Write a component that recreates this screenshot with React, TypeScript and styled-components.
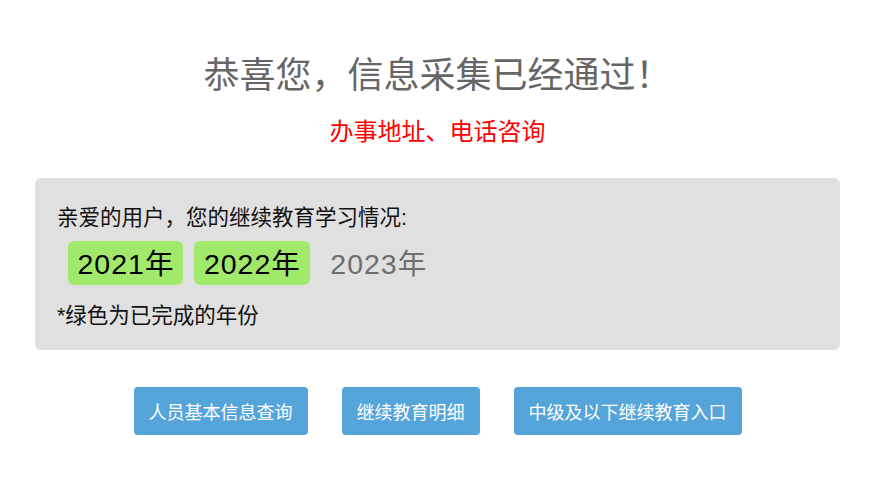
import React from 'react';
import styled, { createGlobalStyle } from 'styled-components';

const GlobalStyle = createGlobalStyle`
  html, body {
    margin: 0;
    padding: 0;
    background: #ffffff;
    font-family: "Liberation Sans", "Noto Sans CJK SC", sans-serif;
  }
`;

const Page = styled.div`
  width: 875px;
  padding: 52px 35px 0;
  box-sizing: border-box;
`;

const Title = styled.h1`
  margin: 0;
  text-align: center;
  font-size: 36px;
  font-weight: 400;
  line-height: 48px;
  color: #666666;
`;

const SubLink = styled.div`
  margin-top: 16px;
  text-align: center;
  font-size: 24px;
  line-height: 32px;
  color: #ff0000;
`;

const InfoBox = styled.div`
  margin-top: 30px;
  background: #e0e0e0;
  border-radius: 6px;
  padding: 26px 22px 22px;
  height: 172px;
  box-sizing: border-box;
`;

const InfoText = styled.div`
  font-size: 21.5px;
  line-height: 28px;
  color: #111111;
`;

const YearRow = styled.div`
  display: flex;
  gap: 11px;
  margin: 9px 0 17px 11px;
`;

const Year = styled.span<{ done?: boolean }>`
  display: inline-block;
  padding: 0 9px 0 9.5px;
  height: 44px;
  line-height: 46px;
  font-size: 28.5px;
  letter-spacing: 1px;
  border-radius: 6px;
  background: ${p => (p.done ? '#a0e96b' : 'transparent')};
  color: ${p => (p.done ? '#000000' : '#6e6e6e')};
`;

const Actions = styled.div`
  display: flex;
  justify-content: center;
  gap: 34px;
  margin-top: 37px;
`;

const ActionButton = styled.button`
  height: 48px;
  padding: 0 15px;
  border: none;
  border-radius: 4px;
  background: #55a4da;
  color: #ffffff;
  font-family: inherit;
  font-size: 18px;
  cursor: pointer;
`;

const years = [
  { label: '2021年', done: true },
  { label: '2022年', done: true },
  { label: '2023年', done: false },
];

const actions = ['人员基本信息查询', '继续教育明细', '中级及以下继续教育入口'];

export default function App() {
  return (
    <>
      <GlobalStyle />
      <Page>
        <Title>恭喜您，信息采集已经通过！</Title>
        <SubLink>办事地址、电话咨询</SubLink>
        <InfoBox>
          <InfoText>亲爱的用户，您的继续教育学习情况:</InfoText>
          <YearRow>
            {years.map(y => (
              <Year key={y.label} done={y.done}>{y.label}</Year>
            ))}
          </YearRow>
          <InfoText>*绿色为已完成的年份</InfoText>
        </InfoBox>
        <Actions>
          {actions.map(a => (
            <ActionButton key={a}>{a}</ActionButton>
          ))}
        </Actions>
      </Page>
    </>
  );
}
